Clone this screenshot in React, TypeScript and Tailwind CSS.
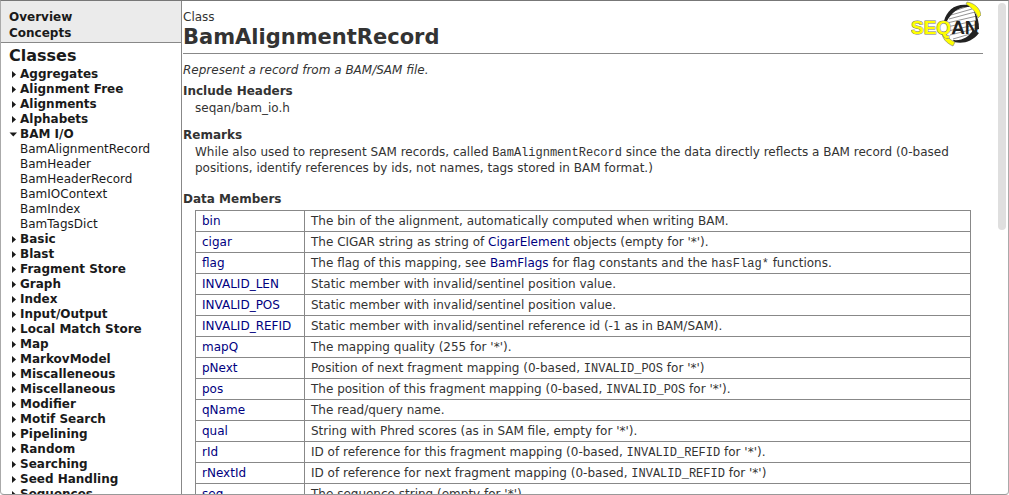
import type { ReactNode } from "react";

const categoriesBefore = ["Aggregates", "Alignment Free", "Alignments", "Alphabets"];
const bamClasses = ["BamAlignmentRecord", "BamHeader", "BamHeaderRecord", "BamIOContext", "BamIndex", "BamTagsDict"];
const categoriesAfter = [
  "Basic", "Blast", "Fragment Store", "Graph", "Index", "Input/Output", "Local Match Store", "Map",
  "MarkovModel", "Miscalleneous", "Miscellaneous", "Modifier", "Motif Search", "Pipelining", "Random",
  "Searching", "Seed Handling", "Sequences",
];

function Code({ children }: { children: ReactNode }) {
  return <code className="font-['Liberation_Mono',monospace] text-[12px] leading-none">{children}</code>;
}

function Ref({ children }: { children: ReactNode }) {
  return <a href="#" className="text-[#000080]">{children}</a>;
}

const members: { name: string; text: ReactNode }[] = [
  { name: "bin", text: "The bin of the alignment, automatically computed when writing BAM." },
  { name: "cigar", text: <>The CIGAR string as string of <Ref>CigarElement</Ref> objects (empty for '*').</> },
  { name: "flag", text: <>The flag of this mapping, see <Ref>BamFlags</Ref> for flag constants and the <Code>hasFlag*</Code> functions.</> },
  { name: "INVALID_LEN", text: "Static member with invalid/sentinel position value." },
  { name: "INVALID_POS", text: "Static member with invalid/sentinel position value." },
  { name: "INVALID_REFID", text: "Static member with invalid/sentinel reference id (-1 as in BAM/SAM)." },
  { name: "mapQ", text: "The mapping quality (255 for '*')." },
  { name: "pNext", text: <>Position of next fragment mapping (0-based, <Code>INVALID_POS</Code> for '*')</> },
  { name: "pos", text: <>The position of this fragment mapping (0-based, <Code>INVALID_POS</Code> for '*').</> },
  { name: "qName", text: "The read/query name." },
  { name: "qual", text: "String with Phred scores (as in SAM file, empty for '*')." },
  { name: "rId", text: <>ID of reference for this fragment mapping (0-based, <Code>INVALID_REFID</Code> for '*').</> },
  { name: "rNextId", text: <>ID of reference for next fragment mapping (0-based, <Code>INVALID_REFID</Code> for '*')</> },
  { name: "seq", text: "The sequence string (empty for '*')." },
];

function Category({ label, open = false, children }: { label: string; open?: boolean; children?: ReactNode }) {
  return (
    <li>
      <a href="#" className="flex items-center font-bold">
        <svg viewBox="0 0 8 8" className="mr-[3px] size-2 shrink-0" fill="#1a1a1a" aria-hidden="true">
          {open ? <path d="M0.5 1.5H8L4.25 5.5Z" /> : <path d="M3 0V7L7 3.5Z" />}
        </svg>
        {label}
      </a>
      {children}
    </li>
  );
}

function Logo() {
  return (
    <svg viewBox="0 0 70 46" className="mr-0.5 h-[46px] w-[70px]" role="img" aria-label="SEQAN">
      <path d="M35 19C38 10 45 4 56 5C65 10 69 20 67 31C61 39 52 41 43 40C36 35 33 27 35 19Z" fill="#fff" />
      <path d="M43 10L58 5M40 14L61 8M38 18L64 11M36 22L66 15M36 26L67 19M37 30L68 23M39 34L67 27M42 38L66 31" stroke="#777" strokeWidth="0.8" />
      <path d="M33 20C36 9 44 2 58 4L59 6C48 5 41 11 36 20Z" fill="#222" />
      <path d="M42 39C51 40 58 36 62 29L68 32C61 41 52 43 43 41Z" fill="#222" />
      <path d="M63 10C66 14 68 20 68 28L65 29C65 22 65 16 63 10Z" fill="#222" />
      <path d="M56 1C63 2 69 7 70 14L67 17C65 11 61 7 55 3Z" fill="#ff0" stroke="#777" strokeWidth="0.6" />
      <path d="M35 31C36 36 39 39 44 41L42 45C35 42 31 37 31 31Z" fill="#ff0" stroke="#777" strokeWidth="0.6" />
      <text y="33" fontFamily="Liberation Sans, sans-serif" fontSize="19" fontWeight="bold" paintOrder="stroke">
        <tspan x="0" fill="#ff0" stroke="#777" strokeWidth="1">SEQ</tspan>
        <tspan fill="#222">AN</tspan>
      </text>
    </svg>
  );
}

export default function App() {
  return (
    <div className="flex h-screen overflow-hidden rounded-b border border-t-[#777] border-r-[#aaa] border-b-[#999] border-l-[#aaa] bg-white font-['DejaVu_Sans',Verdana,sans-serif] text-[12px] leading-4 text-[#333]">
      <nav className="w-[181px] shrink-0 overflow-hidden border-r border-[#888] text-[#1a1a1a]">
        <div className="border-b border-[#888] bg-[#ebebeb] px-2 pt-2 pb-px font-bold">
          <a href="#" className="block">Overview</a>
          <a href="#" className="block">Concepts</a>
        </div>
        <div className="px-2 pt-0.5">
          <h2 className="text-[16px] leading-[22px] font-bold">Classes</h2>
          <ul className="leading-[15px]">
            {categoriesBefore.map((c) => <Category key={c} label={c} />)}
            <Category label="BAM I/O" open>
              <ul className="pl-[11px]">
                {bamClasses.map((c) => <li key={c}><a href="#">{c}</a></li>)}
              </ul>
            </Category>
            {categoriesAfter.map((c) => <Category key={c} label={c} />)}
          </ul>
        </div>
      </nav>
      <main className="min-w-0 flex-1 overflow-hidden pr-[7px] pl-px">
        <header className="mr-2 flex items-start justify-between border-b border-[#888]">
          <div className="pt-2 pb-1">
            <div>Class</div>
            <h1 className="text-[21px] leading-6 font-bold">BamAlignmentRecord</h1>
          </div>
          <Logo />
        </header>
        <p className="mt-2 italic">Represent a record from a BAM/SAM file.</p>
        <h3 className="mt-[5px] font-bold">Include Headers</h3>
        <p className="mt-px pl-3">seqan/bam_io.h</p>
        <h3 className="mt-[11px] font-bold">Remarks</h3>
        <p className="mt-px pr-6 pl-3">
          While also used to represent SAM records, called <Code>BamAlignmentRecord</Code> since the data directly
          reflects a BAM record (0-based positions, identify references by ids, not names, tags stored in BAM format.)
        </p>
        <h3 className="mt-[15px] font-bold">Data Members</h3>
        <div className="mt-[3px] mr-5 ml-3">
          <table className="w-full border-collapse">
            <tbody>
              {members.map((m) => (
                <tr key={m.name}>
                  <td className="w-[109px] border border-[#888] px-1.5 py-0.5"><Ref>{m.name}</Ref></td>
                  <td className="border border-[#888] px-1.5 py-0.5">{m.text}</td>
                </tr>
              ))}
            </tbody>
          </table>
        </div>
      </main>
      <div className="w-[10px] shrink-0 pt-0.5" aria-hidden="true">
        <div className="h-[227px] w-2 rounded-full bg-[#dfdfdf]" />
      </div>
    </div>
  );
}
